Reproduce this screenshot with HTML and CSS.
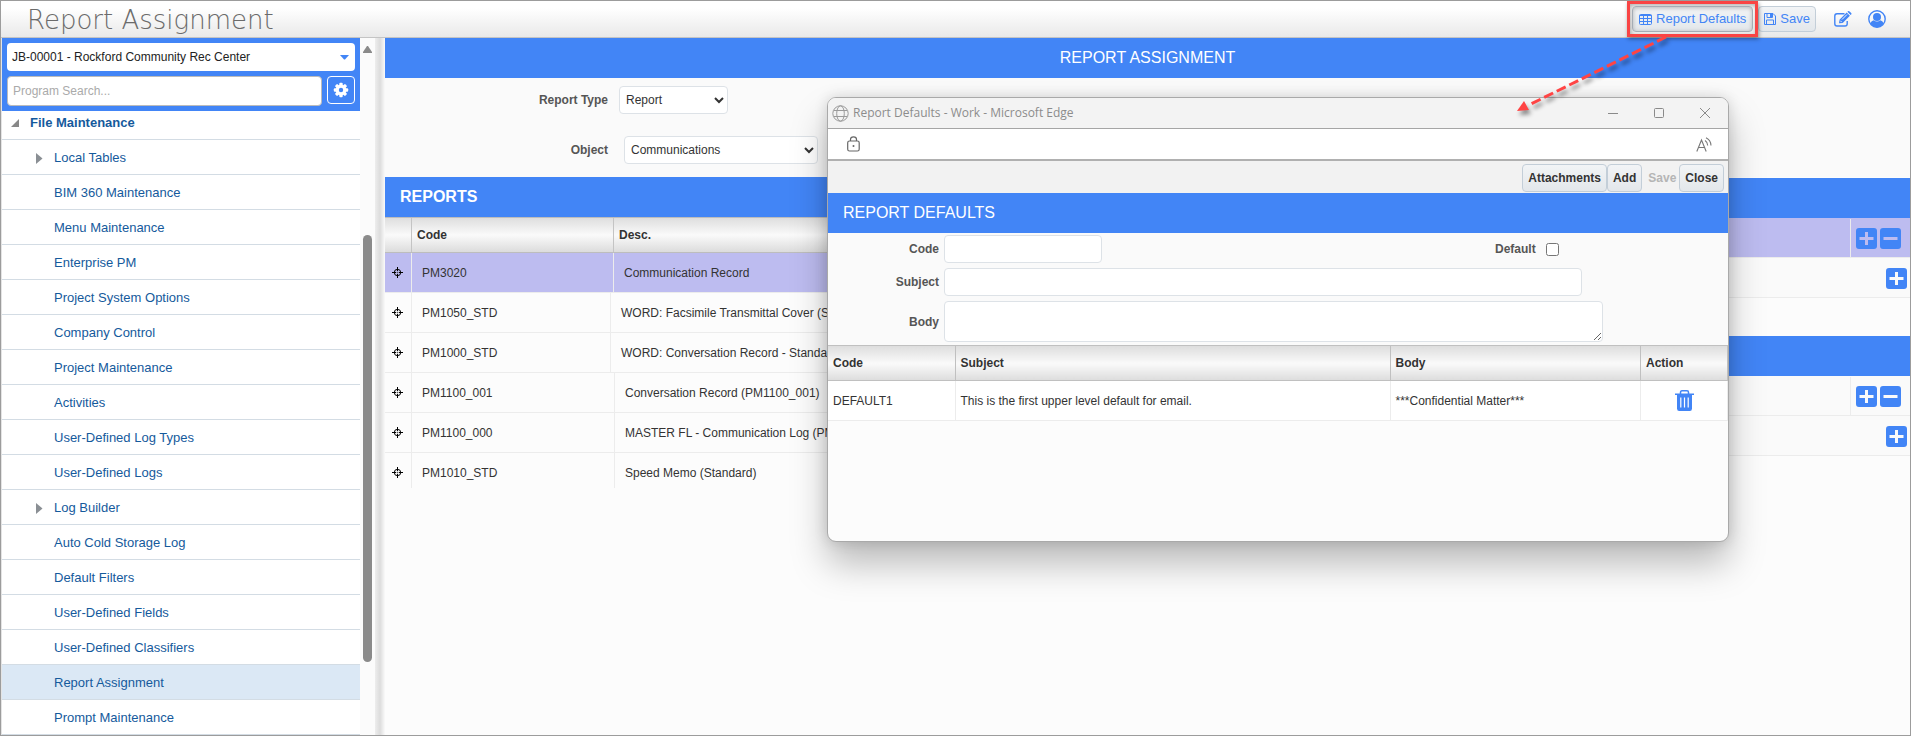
FILE: index.html
```html
<!DOCTYPE html>
<html lang="en">
<head>
<meta charset="utf-8">
<title>Report Assignment</title>
<link rel="stylesheet" href="styles.css">
</head>
<body>
<svg class="defs" aria-hidden="true">
  <symbol id="target" viewBox="0 0 11 11"><g fill="none" stroke="#000"><circle cx="5.500" cy="5.500" r="3.200"/><path d="M5.500 0V4.200M5.500 6.800V11M0 5.500H4.200M6.800 5.500H11"/></g><rect x="5" y="5" width="1" height="1" fill="#555"/></symbol>
  <symbol id="plus" viewBox="0 0 21 21"><path fill-rule="evenodd" fill="#4285f6" d="M3 0H18Q21 0 21 3V18Q21 21 18 21H3Q0 21 0 18V3Q0 0 3 0ZM9 4V9H3.500V12H9V17H12V12H17.500V9H12V4Z"/></symbol>
  <symbol id="minus" viewBox="0 0 21 21"><path fill-rule="evenodd" fill="#4285f6" d="M3 0H18Q21 0 21 3V18Q21 21 18 21H3Q0 21 0 18V3Q0 0 3 0ZM3.500 9V12H17.500V9Z"/></symbol>
</svg>
<div class="app">
  <header class="topbar">
    <h1 class="topbar__title">Report Assignment</h1>
    <div class="topbar__actions">
      <div class="callout">
        <button class="tool tool--pressed" type="button">
          <svg width="13" height="11" viewBox="0 0 13 11"><path fill="none" stroke="#4285f6" d="M1.500 .5H11.500Q12.500 .5 12.500 1.500V9.500Q12.500 10.500 11.500 10.500H1.500Q.5 10.500 .5 9.500V1.500Q.5 .5 1.500 .5ZM.5 1.500H12.500M.5 4.500H12.500M.5 7.500H12.500M4.500 2V10.500M8.500 2V10.500"/></svg>
          Report Defaults
        </button>
        <svg class="callout__arrow" width="156" height="84" viewBox="0 0 156 84" aria-hidden="true"><path d="M151 3L14 71" fill="none" stroke="#ff4444" stroke-width="3" stroke-dasharray="10 4"/><path d="M2 77L9 67L14 76Z" fill="#ff4444"/></svg>
      </div>
      <button class="tool tool--save" type="button">
        <svg width="12" height="12" viewBox="0 0 12 12"><path fill="none" stroke="#4285f6" d="M.5 .5H9L11.500 3V11.500H.5ZM3 .5V4.500H8.500V.5M2.500 11.500V7H9.500V11.500"/><path fill="#4285f6" d="M6 1H8V4H6z"/></svg>
        Save
      </button>
      <button class="icon-btn" type="button" aria-label="Edit"><svg width="18" height="16" viewBox="0 0 18 16"><path fill="none" stroke="#4285f6" stroke-width="1.400" d="M10.500 2.700H3Q.8 2.700 .8 5V12.700Q.8 15 3 15H11Q13.200 15 13.200 12.700V10"/><path fill="#4285f6" d="M5.500 8.700L12.700 1.500L15.900 4.700L8.700 11.900L5 12.300ZM13.400 .8L14 .3Q14.800-.3 15.600.4L17.200 2Q17.900 2.800 17.200 3.500L16.600 4Z"/><path fill="none" stroke="#fff" stroke-width=".9" d="M8 8.500L13 3.500M6.300 9.700L7.700 11.100"/></svg></button>
      <button class="icon-btn" type="button" aria-label="Account"><svg width="18" height="18" viewBox="0 0 18 18"><circle cx="9" cy="9" r="8.200" fill="none" stroke="#4285f6" stroke-width="1.400"/><circle cx="9" cy="7" r="4" fill="#4285f6"/><path fill="#4285f6" d="M2.200 13.500Q3.500 10.500 5.700 10.200Q9 13 12.300 10.200Q14.500 10.500 15.800 13.500Q13.500 17.200 9 17.200T2.200 13.500Z"/></svg></button>
    </div>
  </header>

  <div class="body">
    <aside class="side">
      <div class="side__head">
        <button class="job" type="button">JB-00001 - Rockford Community Rec Center<svg width="9" height="5" viewBox="0 0 9 5"><path fill="#4285f6" d="M0 0H9L5 4.500H4Z"/></svg></button>
        <div class="side__search">
          <input class="search" type="text" placeholder="Program Search..." aria-label="Program search">
          <button class="gear" type="button" aria-label="Settings"><svg width="16" height="16" viewBox="-8 -8 16 16"><g fill="#fff"><circle r="5.400"/><g id="t"><rect x="-1.700" y="-7.200" width="3.400" height="14.400" rx="1"/><rect x="-7.200" y="-1.700" width="14.400" height="3.400" rx="1"/></g><use href="#t" transform="rotate(45)"/></g><circle r="2.200" fill="#4285f6"/></svg></button>
        </div>
      </div>
      <nav aria-label="Programs">
        <ul class="tree">
          <li class="tree__root"><svg width="8" height="8" viewBox="0 0 8 8"><path fill="#888" d="M8 0V8H0Z"/></svg><a href="#">File Maintenance</a></li>
          <li class="tree__parent"><svg width="7" height="11" viewBox="0 0 7 11"><path fill="#8a8f94" d="M0 0L6.500 5.500L0 11Z"/></svg><a href="#">Local Tables</a></li>
          <li><a href="#">BIM 360 Maintenance</a></li>
          <li><a href="#">Menu Maintenance</a></li>
          <li><a href="#">Enterprise PM</a></li>
          <li><a href="#">Project System Options</a></li>
          <li><a href="#">Company Control</a></li>
          <li><a href="#">Project Maintenance</a></li>
          <li><a href="#">Activities</a></li>
          <li><a href="#">User-Defined Log Types</a></li>
          <li><a href="#">User-Defined Logs</a></li>
          <li class="tree__parent"><svg width="7" height="11" viewBox="0 0 7 11"><path fill="#8a8f94" d="M0 0L6.500 5.500L0 11Z"/></svg><a href="#">Log Builder</a></li>
          <li><a href="#">Auto Cold Storage Log</a></li>
          <li><a href="#">Default Filters</a></li>
          <li><a href="#">User-Defined Fields</a></li>
          <li><a href="#">User-Defined Classifiers</a></li>
          <li class="tree__active"><a href="#">Report Assignment</a></li>
          <li><a href="#">Prompt Maintenance</a></li>
        </ul>
      </nav>
    </aside>
    <div class="scroll" aria-hidden="true"><svg width="9" height="7" viewBox="0 0 9 7"><path fill="#8a8a8a" d="M4 0H5L9 6V7H0V6Z"/></svg><div class="scroll__thumb"></div></div>
    <div class="splitter"></div>

    <main class="main">
      <h2 class="bar bar--center">REPORT ASSIGNMENT</h2>
      <form class="filters">
        <label for="rtype">Report Type</label>
        <select id="rtype" class="field field--type"><option>Report</option></select>
        <label for="object">Object</label>
        <select id="object" class="field field--object"><option>Communications</option></select>
      </form>
      <div class="panels">
        <section>
          <h2 class="bar bar--bold">REPORTS</h2>
          <table class="reports">
            <thead><tr><th></th><th>Code</th><th>Desc.</th></tr></thead>
            <tbody>
              <tr class="selected"><td><svg width="11" height="11"><use href="#target"/></svg></td><td>PM3020</td><td>Communication Record</td></tr>
              <tr class="word"><td><svg width="11" height="11"><use href="#target"/></svg></td><td>PM1050_STD</td><td>WORD: Facsimile Transmittal Cover (Standard)</td></tr>
              <tr class="word"><td><svg width="11" height="11"><use href="#target"/></svg></td><td>PM1000_STD</td><td>WORD: Conversation Record - Standard</td></tr>
              <tr><td><svg width="11" height="11"><use href="#target"/></svg></td><td>PM1100_001</td><td>Conversation Record (PM1100_001)</td></tr>
              <tr><td><svg width="11" height="11"><use href="#target"/></svg></td><td>PM1100_000</td><td>MASTER FL - Communication Log (PM1100_000)</td></tr>
              <tr><td><svg width="11" height="11"><use href="#target"/></svg></td><td>PM1010_STD</td><td>Speed Memo (Standard)</td></tr>
            </tbody>
          </table>
        </section>
        <section class="rules">
          <div class="bar"></div>
          <div class="rule rule--selected"><div class="rule__pair"><button type="button" aria-label="Add"><svg width="21" height="21"><use href="#plus"/></svg></button><button type="button" aria-label="Remove"><svg width="21" height="21"><use href="#minus"/></svg></button></div></div>
          <div class="rule"><button type="button" aria-label="Add"><svg width="21" height="21"><use href="#plus"/></svg></button></div>
          <div class="bar rules__second"></div>
          <div class="rule"><div class="rule__pair"><button type="button" aria-label="Add"><svg width="21" height="21"><use href="#plus"/></svg></button><button type="button" aria-label="Remove"><svg width="21" height="21"><use href="#minus"/></svg></button></div></div>
          <div class="rule"><button type="button" aria-label="Add"><svg width="21" height="21"><use href="#plus"/></svg></button></div>
        </section>
      </div>
    </main>
  </div>

  <div class="window" role="dialog" aria-label="Report Defaults">
    <div class="window__title">
      <svg width="17" height="17" viewBox="0 0 17 17"><g fill="none" stroke="#9a9a9a"><circle cx="8.500" cy="8.500" r="7.700"/><ellipse cx="8.500" cy="8.500" rx="3.800" ry="7.700"/><path d="M1.800 5.500H15.200M1.800 11.500H15.200"/></g></svg>
      <span>Report Defaults - Work - Microsoft Edge</span>
      <button type="button" aria-label="Minimize"><svg width="12" height="12" viewBox="0 0 12 12"><path stroke="#8a8a8a" d="M1 6.500H11"/></svg></button>
      <button type="button" aria-label="Maximize"><svg width="12" height="12" viewBox="0 0 12 12"><rect x="1.500" y="1.500" width="9" height="9" rx="1" fill="none" stroke="#8a8a8a"/></svg></button>
      <button type="button" aria-label="Close window"><svg width="12" height="12" viewBox="0 0 12 12"><path stroke="#8a8a8a" d="M1 1L11 11M11 1L1 11"/></svg></button>
    </div>
    <div class="window__address">
      <svg width="13" height="16" viewBox="0 0 13 16"><g fill="none" stroke="#666"><rect x=".7" y="5" width="11.500" height="10" rx="1.800" stroke-width="1.200"/><path d="M3.500 5V3.500Q3.500 .8 6.500 .8T9.500 3.500V5" stroke-width="1.200"/></g><circle cx="6.500" cy="10" r="1" fill="#666"/></svg>
      <svg width="16" height="15" viewBox="0 0 16 15"><path fill="none" stroke="#777" stroke-width="1.100" d="M.8 14.500L5.500 3L10.200 14.500M2.500 10.500H8.600M9 3.500Q11.500 5 11.700 8.500M10 .8Q14.700 3 15 8.500"/></svg>
    </div>
    <div class="window__tools">
      <button type="button">Attachments</button><button type="button">Add</button><button type="button" disabled>Save</button><button type="button">Close</button>
    </div>
    <h2 class="bar">REPORT DEFAULTS</h2>
    <form class="defaults">
      <label for="code">Code</label>
      <div class="defaults__row"><input id="code" class="field field--code" type="text"><label for="isdef">Default</label><input id="isdef" type="checkbox"></div>
      <label for="subject">Subject</label>
      <input id="subject" class="field field--subject" type="text">
      <label for="bodytext">Body</label>
      <textarea id="bodytext" class="field field--body"></textarea>
    </form>
    <table class="emails">
      <colgroup><col class="c1"><col class="c2"><col class="c3"><col class="c4"></colgroup>
      <thead><tr><th>Code</th><th>Subject</th><th>Body</th><th>Action</th></tr></thead>
      <tbody><tr><td>DEFAULT1</td><td>This is the first upper level default for email.</td><td>***Confidential Matter***</td><td class="act"><button type="button" aria-label="Delete"><svg width="19" height="21" viewBox="0 0 19 21"><path fill="none" stroke="#4285f6" stroke-width="1.500" d="M0 4.300H19M5.500 4V2.500Q5.500 .8 7 .8H12Q13.500 .8 13.500 2.500V4"/><path fill="#4285f6" d="M2 5H17V18.500Q17 21 14.800 21H4.200Q2 21 2 18.500Z"/><path stroke="#fff" stroke-width="1.200" d="M5.800 7.500V17.500M9.500 7.500V17.500M13.200 7.500V17.500"/></svg></button></td></tr></tbody>
    </table>
  </div>
</div>
</body>
</html>
```
FILE: styles.css
```css
* { box-sizing: border-box; }
body { margin: 0; font: 12px/16px "Liberation Sans", Arial, sans-serif; color: #333; }
h1, h2, ul { margin: 0; padding: 0; font-weight: 400; list-style: none; }
button { font: inherit; color: inherit; background: none; border: 0; padding: 0; }
svg { display: block; flex: none; }
.defs { position: absolute; width: 0; height: 0; }

.app { position: relative; display: flex; flex-direction: column; height: 100vh; overflow: hidden; border: 1px solid #9c9c9c; background: #fcfcfc; }

.topbar { display: flex; justify-content: space-between; flex: none; height: 37px; padding: 0 24px 0 26px; border-bottom: 1px solid #c4c4c4; background: linear-gradient(#fff 20%, #e9e9e9); }
.topbar__title { font: 26px/38px "DejaVu Sans Light", "DejaVu Sans", sans-serif; font-weight: 200; color: #6b6b6b; }
.topbar__actions { display: flex; align-items: center; color: #4285f6; }
.callout { position: relative; z-index: 3; padding: 2px; border: 3px solid #f94444; box-shadow: 1px 2px 4px rgba(0,0,0,.4), inset 1px 2px 4px rgba(0,0,0,.3); }
.callout__arrow { position: absolute; top: 30px; right: 84px; filter: drop-shadow(2px 4px 2px rgba(0,0,0,.45)); pointer-events: none; }
.tool { display: flex; align-items: center; gap: 4px; height: 26px; padding: 0 6px; border: 1px solid #c3ced8; border-radius: 4px; background: linear-gradient(#f2f4f6, #e3e7eb); font-size: 13px; }
.tool--save { padding: 0 5px; }
.tool--pressed { border-color: #a5adb5; box-shadow: inset 0 1px 4px rgba(0,0,0,.25); }
.icon-btn { margin-left: 18px; }
.icon-btn + .icon-btn { margin-left: 16px; }

.body { display: flex; flex: 1; min-height: 0; }
.side { width: 359px; flex: none; overflow: hidden; background: #fff; border-left: 1px solid #e4e4e4; }
.side__head { display: flex; flex-direction: column; gap: 5px; padding: 5px; background: #4285f6; }
.job { display: flex; align-items: center; justify-content: space-between; height: 28px; padding: 0 6px 0 5px; border-radius: 4px; background: #fff; color: #222; }
.side__search { display: flex; gap: 5px; }
.search { flex: 1; min-width: 0; height: 30px; padding: 0 5px; border: 1px solid #bbb; border-radius: 4px; font: inherit; }
.search::placeholder { color: #aaa; }
.gear { display: grid; place-items: center; width: 28px; height: 28px; border: 1px solid #fff; border-radius: 4px; }
.tree li { display: flex; align-items: center; height: 35px; padding: 2px 0 0 52px; border-bottom: 1px solid #d3dce4; font-size: 13px; }
.tree a { color: #155a9c; text-decoration: none; }
.tree .tree__root { height: 29px; padding: 0 0 4px 9px; gap: 11px; font-weight: 700; }
.tree .tree__parent { padding-left: 34px; gap: 11px; }
.tree .tree__active { background: #dbe8f5; }
.scroll { display: flex; flex-direction: column; align-items: center; width: 15px; flex: none; padding-top: 8px; background: #fbfbfb; }
.scroll__thumb { width: 9px; height: 62%; margin-top: 182px; border-radius: 5px; background: #8a8a8a; }
.splitter { width: 10px; flex: none; background: linear-gradient(90deg, #ededed, #dcdcdc 50%, #fafafa); }

.main { flex: 1; min-width: 0; }
.bar { height: 40px; padding-left: 15px; background: #4285f6; color: #fff; font-size: 16px; line-height: 40px; }
.bar--center { padding: 0; text-align: center; }
.bar--bold { font-weight: 700; }
label { font-weight: 700; color: #555; }
.field { height: 28px; border: 1px solid #dde2e7; border-radius: 4px; background: #fff; font: inherit; color: #333; }
.filters { display: grid; grid-template-columns: 223px 1fr; column-gap: 11px; row-gap: 22px; align-items: center; padding: 8px 0 13px; background: #fafafa; }
.filters label { text-align: right; }
.field--type { width: 109px; padding: 0 2px; }
.field--object { width: 194px; margin-left: 5px; padding: 0 2px; }

.panels { display: grid; grid-template-columns: 1fr 1fr; }
.reports, .reports thead, .reports tbody { display: block; }
.reports tr { display: grid; grid-template-columns: 27px 203px 1fr; height: 40px; border-bottom: 1px solid #ececec; }
.reports tr.word { grid-template-columns: 27px 199px 1fr; }
.reports tr:last-child { height: 35px; border: 0; }
.reports thead tr, .reports thead tr:last-child { grid-template-columns: 27px 202px 1fr; height: 36px; border: solid #bdbdbd; border-width: 1px 0; background: linear-gradient(#dedede, #fafafa 50%, #dcdcdc); }
.reports th { padding: 0 5px; border-right: 1px solid #c4c4c4; text-align: left; line-height: 34px; }
.reports td { padding: 0 10px; border-right: 1px solid #ececec; line-height: 41px; white-space: nowrap; overflow: hidden; }
.reports td:first-child { padding: 14px 0 0 7px; }
.reports .selected { grid-template-columns: 27px 202px 1fr; background: #bdbcf0; }

.rules { padding-top: 1px; }
.rule { display: flex; align-items: center; justify-content: flex-end; height: 40px; padding: 1px 3px 0 0; border-bottom: 1px solid #ececec; background: #fafafa; }
.rule--selected { background: #bdbcf0; }
.rule__pair { display: flex; align-items: center; align-self: stretch; gap: 3px; padding: 0 6px 0 5px; border-left: 1px solid #ececec; }
.rules__second { margin-top: 38px; }

.window { position: absolute; z-index: 2; left: 826px; top: 96px; width: 902px; height: 445px; border: 1px solid #a9a9a9; border-radius: 9px; background: #fcfcfc; overflow: hidden; box-shadow: 0 22px 36px rgba(0,0,0,.26), 0 0 14px rgba(0,0,0,.14); }
.window__title { display: flex; align-items: center; height: 31px; padding: 0 17px 0 4px; border-bottom: 1px solid #a5a5a5; background: #f3f3f3; color: #8c8c8c; font-family: "Open Sans", "Noto Sans", sans-serif; }
.window__title span { flex: 1; margin-left: 4px; }
.window__title button { margin-left: 34px; }
.window__address { display: flex; align-items: center; justify-content: space-between; height: 32px; padding: 0 16px 0 19px; border-bottom: 2px solid #b0b0b0; background: #fff; }
.window__tools { display: flex; justify-content: flex-end; height: 32px; padding: 3px 4px 1px; background: #f2f2f2; color: #333; }
.window__tools button { height: 28px; padding: 0 5px; border: 1px solid #c3ced8; border-radius: 4px; background: linear-gradient(#f2f4f6, #e3e7eb); font-weight: 700; }
.window__tools button:disabled { padding: 0 2px 0 5px; border-color: transparent; background: none; color: #b5b5b5; }
.defaults { display: grid; grid-template-columns: 111px 1fr; column-gap: 5px; row-gap: 5px; align-items: center; padding: 2px 0 3px; background: #fafafa; }
.defaults label { text-align: right; }
.defaults__row { display: flex; align-items: center; }
.defaults__row label { flex: none; margin-left: 393px; }
.defaults__row input[type="checkbox"] { width: 13px; height: 13px; margin: 0 0 0 10px; }
.field--code { width: 158px; }
.field--subject { width: 638px; }
.field--body { display: block; width: 659px; height: 41px; resize: both; }
.emails { width: 100%; border-collapse: collapse; table-layout: fixed; background: #fff; }
.c1 { width: 127px; } .c2 { width: 435px; } .c4 { width: 87px; }
.emails th { height: 35px; padding: 0 5px; border: 1px solid #c0c0c0; border-left: 0; background: linear-gradient(#dedede, #fafafa 50%, #dcdcdc); text-align: left; }
.emails td { height: 40px; padding: 0 5px; border: 1px solid #ececec; border-left: 0; }
.emails .act button { display: block; margin: auto; }
```
